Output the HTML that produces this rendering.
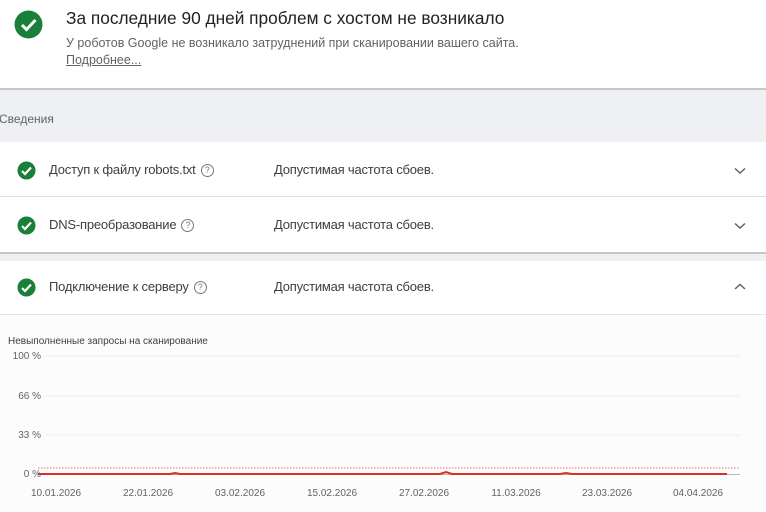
<!DOCTYPE html>
<html><head><meta charset="utf-8"><style>
*{margin:0;padding:0;box-sizing:border-box}
body{width:766px;height:512px;overflow:hidden;background:#fff;font-family:"Liberation Sans",sans-serif;position:relative;color:#202124}
.a{position:absolute;white-space:nowrap}
.row{position:absolute;left:0;width:766px;height:54px;background:#fff}
.lbl{font-size:13px;color:#3c4043;letter-spacing:-0.2px}
.q{display:inline-block;width:13px;height:13px;border:1.3px solid #777;border-radius:50%;font-size:9px;text-align:center;line-height:11px;color:#777;vertical-align:1px;margin-left:5px}
</style></head><body>
<svg class="a" style="left:14px;top:10px" width="29" height="29" viewBox="0 0 29 29"><circle cx="14.5" cy="14.5" r="14" fill="#188038"/><path d="M8 15l4.5 4.5L21.5 10" stroke="#fff" stroke-width="3" fill="none"/></svg>
<div class="a" style="left:66px;top:8px;font-size:17.3px;color:#202124">За последние 90 дней проблем с хостом не возникало</div>
<div class="a" style="left:66px;top:36px;font-size:12.5px;color:#5f6368">У роботов Google не возникало затруднений при сканировании вашего сайта.</div>
<div class="a" style="left:66px;top:53px;font-size:12.5px;color:#5f6368;text-decoration:underline">Подробнее...</div>
<div class="a" style="left:0;top:88px;width:766px;height:54px;background:#eef0f4;border-top:2px solid #c4c6c9"></div>
<div class="a" style="left:-1px;top:112px;font-size:12px;color:#5f6368">Сведения</div>

<div class="row" style="top:143px;border-bottom:1px solid #e0e0e0"></div>
<div class="row" style="top:198px"></div>
<div class="a" style="left:0;top:252px;width:766px;height:9px;background:#eef0f4;border-top:2px solid #c4c6c9"></div>
<div class="row" style="top:261px;border-bottom:1px solid #e6e6e6"></div>

<svg class="a" style="left:17px;top:161px" width="19" height="19" viewBox="0 0 19 19"><circle cx="9.5" cy="9.5" r="9" fill="#188038"/><path d="M5 10l3 3 6-6.5" stroke="#fff" stroke-width="2.2" fill="none"/></svg>
<div class="a lbl" style="left:49px;top:162px">Доступ к файлу robots.txt<span class="q">?</span></div>
<div class="a lbl" style="left:274px;top:162px">Допустимая частота сбоев.</div>
<svg class="a" style="left:734px;top:167px" width="12" height="8"><path d="M1 1.5l5 4.5L11 1.5" stroke="#5f6368" stroke-width="1.5" fill="none"/></svg>

<svg class="a" style="left:17px;top:216px" width="19" height="19" viewBox="0 0 19 19"><circle cx="9.5" cy="9.5" r="9" fill="#188038"/><path d="M5 10l3 3 6-6.5" stroke="#fff" stroke-width="2.2" fill="none"/></svg>
<div class="a lbl" style="left:49px;top:217px">DNS-преобразование<span class="q">?</span></div>
<div class="a lbl" style="left:274px;top:217px">Допустимая частота сбоев.</div>
<svg class="a" style="left:734px;top:222px" width="12" height="8"><path d="M1 1.5l5 4.5L11 1.5" stroke="#5f6368" stroke-width="1.5" fill="none"/></svg>

<svg class="a" style="left:17px;top:278px" width="19" height="19" viewBox="0 0 19 19"><circle cx="9.5" cy="9.5" r="9" fill="#188038"/><path d="M5 10l3 3 6-6.5" stroke="#fff" stroke-width="2.2" fill="none"/></svg>
<div class="a lbl" style="left:49px;top:279px">Подключение к серверу<span class="q">?</span></div>
<div class="a lbl" style="left:274px;top:279px">Допустимая частота сбоев.</div>
<svg class="a" style="left:734px;top:283px" width="12" height="8"><path d="M1 6l5-4.5L11 6" stroke="#5f6368" stroke-width="1.5" fill="none"/></svg>

<div class="a" style="left:0;top:316px;width:766px;height:196px;background:#fcfcfc"></div>
<div class="a" style="left:8px;top:336px;font-size:10px;color:#3c4043">Невыполненные запросы на сканирование</div>
<svg class="a" style="left:0;top:345px" width="766" height="167" font-family="Liberation Sans" font-size="10" fill="#5f6368">
<g stroke="#eeeeee"><line x1="45" y1="11" x2="740" y2="11"/><line x1="45" y1="51" x2="740" y2="51"/><line x1="45" y1="90" x2="740" y2="90"/></g>
<line x1="45" y1="129.5" x2="740" y2="129.5" stroke="#bbb"/>
<line x1="38" y1="123" x2="740" y2="123" stroke="#e8716b" stroke-dasharray="1.5,1.5"/>
<polyline points="38,129 170,129 175,128 180,129 440,129 446,127 452,129 560,129 566,128 572,129 727,129" stroke="#d93025" stroke-width="2" fill="none"/>
<g text-anchor="end"><text x="41" y="14">100 %</text><text x="41" y="54">66 %</text><text x="41" y="93">33 %</text><text x="41" y="132">0 %</text></g>
<g text-anchor="middle"><text x="56" y="151">10.01.2026</text><text x="148" y="151">22.01.2026</text><text x="240" y="151">03.02.2026</text><text x="332" y="151">15.02.2026</text><text x="424" y="151">27.02.2026</text><text x="516" y="151">11.03.2026</text><text x="607" y="151">23.03.2026</text><text x="698" y="151">04.04.2026</text></g>
</svg>
</body></html>
